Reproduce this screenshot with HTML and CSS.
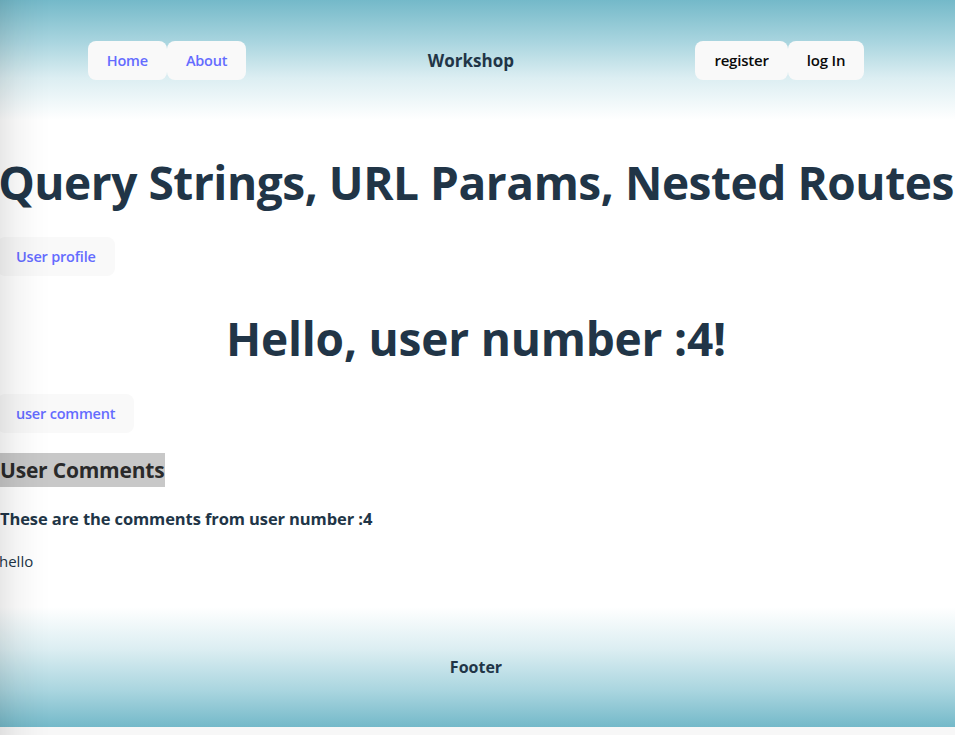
FILE: index.html
```html
<!DOCTYPE html>
<html lang="en">
<head>
<meta charset="utf-8">
<title>Workshop</title>
<link rel="stylesheet" href="styles.css">
</head>
<body>
<div class="page">
  <header class="topbar">
    <nav class="nav-group">
      <a class="btn btn-link" href="#">Home</a>
      <a class="btn btn-link" href="#">About</a>
    </nav>
    <span class="brand">Workshop</span>
    <div class="nav-group">
      <button class="btn btn-plain" type="button">register</button>
      <button class="btn btn-plain" type="button">log In</button>
    </div>
  </header>
  <main class="content">
    <h1 class="title">Query Strings, URL Params, Nested Routes</h1>
    <div class="row"><a class="btn btn-link" href="#">User profile</a></div>
    <h1 class="hello">Hello, user number :4!</h1>
    <div class="row"><a class="btn btn-link" href="#">user comment</a></div>
    <h2 class="comments-title">User Comments</h2>
    <h3 class="comments-sub">These are the comments from user number :4</h3>
    <p class="comment">hello</p>
  </main>
  <footer class="footer">Footer</footer>
</div>
</body>
</html>
```
FILE: styles.css
```css
html, body {
  margin: 0;
  padding: 0;
  background: #ffffff;
}
body {
  font-family: "Open Sans", "Noto Sans", sans-serif;
  color: #213547;
  font-size: 16px;
  line-height: 1.5;
  overflow: hidden;
}
body::after {
  content: "";
  position: fixed;
  top: 0;
  left: 0;
  bottom: 0;
  width: 50px;
  background: linear-gradient(to right, rgba(0,0,0,0.09) 0%, rgba(0,0,0,0.04) 35%, rgba(0,0,0,0.01) 70%, rgba(0,0,0,0) 100%);
  pointer-events: none;
}
.page {
  margin-left: -3px;
  width: calc(100% + 3px);
  padding-bottom: 8px;
  background: #f7f7f7;
}
.topbar {
  height: 120px;
  display: flex;
  justify-content: space-around;
  align-items: center;
  background: linear-gradient(to bottom, #74b9c9 0%, #a9d5df 35%, #dceef2 65%, #ffffff 100%);
}
.nav-group {
  display: flex;
  align-items: center;
}
.brand {
  font-size: 17px;
  font-weight: 700;
  color: #213547;
  padding-top: 2px;
}
.btn {
  display: inline-block;
  box-sizing: border-box;
  height: 39px;
  padding: 0 18px;
  line-height: 37px;
  font-family: inherit;
  font-size: 14.5px;
  font-weight: 500;
  border: 1px solid transparent;
  border-radius: 8px;
  background: #f9f9f9;
  text-decoration: none;
  cursor: pointer;
  letter-spacing: -0.2px;
}
.btn-link {
  color: #646cff;
  font-weight: 600;
}
.btn-plain {
  color: #0a0a0a;
  font-weight: 600;
  font-size: 15px;
}
.content {
  background: #ffffff;
  padding: 34px 0 34px;
}
.row {
  display: flex;
}
.title, .hello {
  margin: 0;
  font-size: 46px;
  line-height: 56px;
  font-weight: 700;
  text-align: center;
  white-space: nowrap;
  color: #213547;
}
.title {
  margin-bottom: 27px;
  letter-spacing: -0.45px;
}
.hello {
  margin: 34px 0 28px;
  letter-spacing: -0.2px;
}
.comments-title {
  margin: 20px 0 0;
  width: fit-content;
  padding-left: 3px;
  padding-right: 0;
  font-size: 21px;
  line-height: 34px;
  font-weight: 700;
  letter-spacing: -0.2px;
  background: #c8c8c8;
  color: #2a2a2a;
}
.comments-sub {
  margin: 20px 0 0 3px;
  font-size: 16.5px;
  line-height: 24px;
  font-weight: 700;
  letter-spacing: -0.1px;
}
.comment {
  margin: 18px 0 0 2px;
  font-size: 15px;
  line-height: 24px;
}
.footer {
  height: 120px;
  display: flex;
  align-items: center;
  justify-content: center;
  font-size: 16px;
  font-weight: 700;
  color: #213547;
  background: linear-gradient(to bottom, #ffffff 0%, #dceef2 35%, #a9d5df 70%, #74b9c9 100%);
}
```
